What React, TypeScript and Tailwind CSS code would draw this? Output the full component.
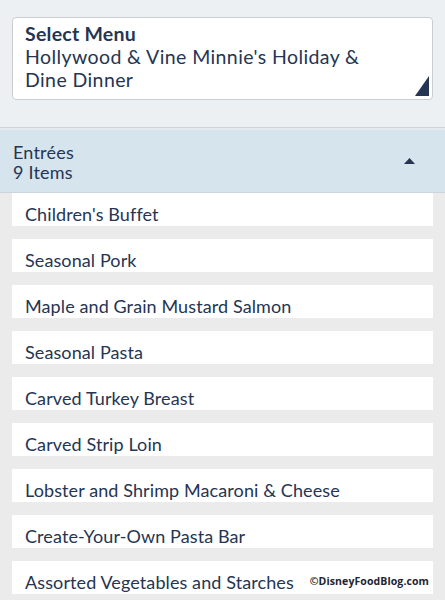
import React from "react";

const items = [
  "Children's Buffet",
  "Seasonal Pork",
  "Maple and Grain Mustard Salmon",
  "Seasonal Pasta",
  "Carved Turkey Breast",
  "Carved Strip Loin",
  "Lobster and Shrimp Macaroni & Cheese",
  "Create-Your-Own Pasta Bar",
  "Assorted Vegetables and Starches",
];

export default function App() {
  return (
    <div
      className="w-[445px] h-[600px] overflow-hidden bg-[#ebebeb] text-[#253552]"
      style={{ fontFamily: "Lato, 'Open Sans', sans-serif" }}
    >
      <div className="h-[127px] bg-[#edf0f3] px-[12px] pt-[17px]">
        <div className="relative h-[83px] rounded-[4px] border border-[#c9cdd2] bg-white pl-[12px] pt-[4px]">
          <div className="text-[19.5px] font-bold leading-[23px] tracking-[0.25px]">Select Menu</div>
          <div className="text-[19.5px] leading-[23px] pr-[40px] tracking-[0.4px]">
            Hollywood &amp; Vine Minnie's Holiday &amp; Dine Dinner
          </div>
          <svg
            className="absolute right-[3px] bottom-[3px]"
            width="14"
            height="20"
            viewBox="0 0 14 20"
          >
            <path d="M14 0 L14 20 L0 20 Z" fill="#253552" />
          </svg>
        </div>
      </div>
      <div className="h-[1px] bg-[#cfd4d9]" />
      <div className="h-[2px] bg-[#e6eaee]" />
      <div className="flex h-[63px] items-center justify-between bg-[#d6e4ee] pl-[13px] pr-[30px] border-b border-[#c9d6e0]">
        <div className="text-[18px] leading-[20px] tracking-[0.2px] pt-[1px]">
          <div>Entrées</div>
          <div>9 Items</div>
        </div>
        <svg width="11" height="6" viewBox="0 0 11 6">
          <path d="M5.5 0 L11 6 L0 6 Z" fill="#253552" />
        </svg>
      </div>
      <div className="flex flex-col gap-[13px] px-[12px]">
        {items.map((it, i) => (
          <div
            key={i}
            className="relative h-[33px] overflow-hidden bg-white pl-[13px] pt-[11px] text-[18px] leading-[20px] tracking-[0.1px] whitespace-nowrap"
          >
            {it}
            {i === items.length - 1 && (
              <span
                className="absolute right-[4px] top-[13px] text-[10.5px] font-bold leading-[14px] text-[#1e2430]"
                style={{ fontFamily: "'Open Sans', sans-serif" }}
              >
                ©DisneyFoodBlog.com
              </span>
            )}
          </div>
        ))}
      </div>
    </div>
  );
}
